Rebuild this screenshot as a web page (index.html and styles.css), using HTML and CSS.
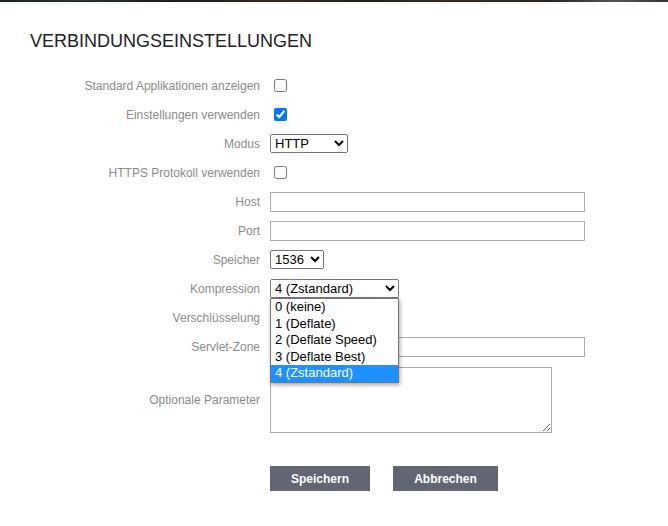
FILE: index.html
```html
<!DOCTYPE html>
<html lang="de">
<head>
    <meta charset="UTF-8">
    <meta name="viewport" content="width=device-width, initial-scale=1.0">
    <title>Verbindungseinstellungen</title>
    <link rel="stylesheet" href="styles.css">
</head>
<body>

<div class="top-strip"></div>

<h1 class="page-title">VERBINDUNGSEINSTELLUNGEN</h1>

<form class="settings" onsubmit="return false">
    <div class="row">
        <label for="showApps">Standard Applikationen anzeigen</label>
        <div class="control"><input type="checkbox" id="showApps"></div>
    </div>
    <div class="row">
        <label for="useSettings">Einstellungen verwenden</label>
        <div class="control"><input type="checkbox" id="useSettings" checked></div>
    </div>
    <div class="row">
        <label for="mode">Modus</label>
        <div class="control">
            <select id="mode" class="sel-mode">
                <option>HTTP</option>
                <option>HTTPS</option>
            </select>
        </div>
    </div>
    <div class="row">
        <label for="https">HTTPS Protokoll verwenden</label>
        <div class="control"><input type="checkbox" id="https"></div>
    </div>
    <div class="row">
        <label for="host">Host</label>
        <div class="control"><input type="text" id="host" class="text-input"></div>
    </div>
    <div class="row">
        <label for="port">Port</label>
        <div class="control"><input type="text" id="port" class="text-input"></div>
    </div>
    <div class="row">
        <label for="memory">Speicher</label>
        <div class="control">
            <select id="memory" class="sel-memory">
                <option>1536</option>
                <option>1024</option>
                <option>512</option>
            </select>
        </div>
    </div>
    <div class="row">
        <label for="compression">Kompression</label>
        <div class="control">
            <span class="select-wrap">
                <select id="compression" class="sel-compression">
                    <option>0 (keine)</option>
                    <option>1 (Deflate)</option>
                    <option>2 (Deflate Speed)</option>
                    <option>3 (Deflate Best)</option>
                    <option selected>4 (Zstandard)</option>
                </select>
                <!-- geöffnete Auswahlliste -->
                <ul class="dropdown">
                    <li>0 (keine)</li>
                    <li>1 (Deflate)</li>
                    <li>2 (Deflate Speed)</li>
                    <li>3 (Deflate Best)</li>
                    <li class="active">4 (Zstandard)</li>
                </ul>
            </span>
        </div>
    </div>
    <div class="row">
        <label for="encryption">Verschlüsselung</label>
        <div class="control">
            <select id="encryption" class="sel-memory">
                <option>Keine</option>
            </select>
        </div>
    </div>
    <div class="row">
        <label for="zone">Servlet-Zone</label>
        <div class="control"><input type="text" id="zone" class="text-input"></div>
    </div>
    <div class="row row-area">
        <label for="params">Optionale Parameter</label>
        <div class="control"><textarea id="params"></textarea></div>
    </div>
    <div class="actions">
        <button type="submit" class="btn btn-save">Speichern</button>
        <button type="button" class="btn btn-cancel">Abbrechen</button>
    </div>
</form>

</body>
</html>
```

FILE: styles.css
```css
/* Global Styles */
body {
    font-family: 'Liberation Sans', Arial, sans-serif;
    margin: 0;
    padding: 0;
    background-color: #fff;
    color: #222;
}

.top-strip {
    height: 2px;
    background: linear-gradient(90deg, #1c2228 0%, #26323a 12%, #1a1d22 25%, #3a2418 40%, #2a2016 55%, #3b2a1c 70%, #2b2220 82%, #5a5250 92%, #3a3434 100%);
}

.page-title {
    font-size: 18px;
    font-weight: normal;
    line-height: 21px;
    margin: 29px 0 0 30px;
    color: #222;
}

/* Form */
.settings {
    margin-top: 19px;
}

.row {
    display: grid;
    grid-template-columns: 260px 1fr;
    column-gap: 10px;
    height: 29px;
    align-items: center;
}

.row label {
    text-align: right;
    font-size: 12px;
    color: #8a8a8a;
}

.control {
    display: flex;
    align-items: center;
}

.control input[type="checkbox"] {
    width: 13px;
    height: 13px;
    margin: 0 0 0 4px;
}

.text-input {
    box-sizing: border-box;
    width: 315px;
    height: 20px;
    margin: 0;
    border: 1px solid #ababab;
    font-size: 13px;
}

select {
    box-sizing: border-box;
    height: 19px;
    margin: 0;
    font-family: 'Liberation Sans', Arial, sans-serif;
    font-size: 13px;
    color: #000;
}

.sel-mode {
    width: 78px;
}

.sel-memory {
    width: 54px;
}

.sel-compression {
    width: 129px;
}

.select-wrap {
    position: relative;
    display: inline-block;
    height: 19px;
}

/* opened list of the compression select */
.dropdown {
    position: absolute;
    top: 19px;
    left: 0;
    z-index: 5;
    box-sizing: border-box;
    width: 129px;
    margin: 0;
    padding: 0;
    list-style: none;
    background-color: #fff;
    border: 1px solid #767676;
    box-shadow: 1px 2px 4px rgba(0, 0, 0, 0.35);
    font-size: 13px;
    color: #000;
}

.dropdown li {
    height: 16.6px;
    line-height: 16.6px;
    padding-left: 4px;
    white-space: nowrap;
}

.dropdown li.active {
    background-color: #1e90ff;
    color: #fff;
}

.row-area {
    height: auto;
    padding: 6px 0 5px;
}

textarea {
    box-sizing: border-box;
    width: 282px;
    height: 66px;
    margin: 0;
    border: 1px solid #ababab;
    font-size: 13px;
    display: block;
}

/* Buttons */
.actions {
    display: flex;
    gap: 23px;
    margin: 28px 0 0 270px;
}

.btn {
    height: 25px;
    padding: 0;
    background-color: #626672;
    color: #fff;
    border: none;
    font-family: 'Liberation Sans', Arial, sans-serif;
    font-size: 12px;
    font-weight: bold;
    cursor: pointer;
}

.btn-save {
    width: 100px;
}

.btn-cancel {
    width: 105px;
}

.btn:hover {
    background-color: #4e525c;
}
```
